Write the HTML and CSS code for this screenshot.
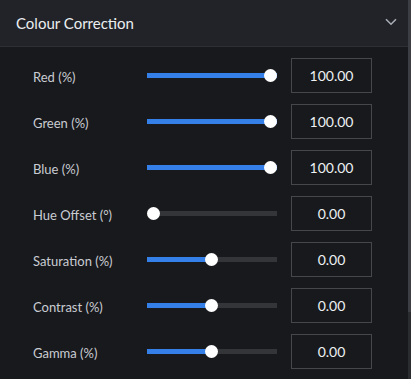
FILE: index.html
```html
<!DOCTYPE html>
<html>
<head>
<meta charset="utf-8">
<link rel="stylesheet" href="styles.css">
</head>
<body>
<div class="frame">
  <div class="panel">
    <div class="header">
      <span class="title">Colour Correction</span>
      <svg class="chevron" width="12" height="8" viewBox="0 0 12 8"><path d="M1 1.2 L6 6.2 L11 1.2" fill="none" stroke="#a9adb5" stroke-width="1.6"/></svg>
    </div>
    <div class="body">
      <div class="row">
        <span class="label">Red (%)</span>
        <div class="slider"><div class="track"><div class="fill" style="width:130px"></div></div><div class="thumb" style="left:117px"></div></div>
        <div class="box">100.00</div>
      </div>
      <div class="row">
        <span class="label">Green (%)</span>
        <div class="slider"><div class="track"><div class="fill" style="width:130px"></div></div><div class="thumb" style="left:117px"></div></div>
        <div class="box">100.00</div>
      </div>
      <div class="row">
        <span class="label">Blue (%)</span>
        <div class="slider"><div class="track"><div class="fill" style="width:130px"></div></div><div class="thumb" style="left:117px"></div></div>
        <div class="box">100.00</div>
      </div>
      <div class="row">
        <span class="label">Hue Offset (°)</span>
        <div class="slider"><div class="track"><div class="fill" style="width:0px"></div></div><div class="thumb" style="left:0px"></div></div>
        <div class="box">0.00</div>
      </div>
      <div class="row">
        <span class="label">Saturation (%)</span>
        <div class="slider"><div class="track"><div class="fill" style="width:65px"></div></div><div class="thumb" style="left:58px"></div></div>
        <div class="box">0.00</div>
      </div>
      <div class="row">
        <span class="label">Contrast (%)</span>
        <div class="slider"><div class="track"><div class="fill" style="width:65px"></div></div><div class="thumb" style="left:58px"></div></div>
        <div class="box">0.00</div>
      </div>
      <div class="row">
        <span class="label">Gamma (%)</span>
        <div class="slider"><div class="track"><div class="fill" style="width:65px"></div></div><div class="thumb" style="left:58px"></div></div>
        <div class="box">0.00</div>
      </div>
    </div>
  </div>
  <div class="scrollbar"><div class="scroll-thumb"></div></div>
</div>
</body>
</html>
```
FILE: styles.css
```css
html, body {
  margin: 0;
  padding: 0;
  background: #18191d;
  width: 411px;
  height: 379px;
  overflow: hidden;
  font-family: Lato, "Noto Sans", sans-serif;
}
.frame {
  display: flex;
  width: 411px;
  height: 379px;
}
.panel {
  flex: 1;
  display: flex;
  flex-direction: column;
  min-width: 0;
}
.header {
  height: 46px;
  box-sizing: border-box;
  background: #212328;
  border-bottom: 1px solid #2d2f34;
  height: 47px;
  display: flex;
  align-items: center;
  justify-content: space-between;
  padding: 0 11px 0 16px;
}
.title {
  color: #eceef1;
  font-size: 15px;
  margin-top: -1px;
}
.chevron {
  display: block;
  margin-top: -3px;
}
.body {
  display: flex;
  flex-direction: column;
  gap: 11px;
  padding: 11px 0 0 33px;
}
.row {
  display: grid;
  grid-template-columns: 114px 130px 81px;
  column-gap: 0;
  align-items: center;
  height: 35px;
}
.label {
  color: #c9ccd2;
  font-size: 13px;
  padding-top: 2px;
}
.slider {
  position: relative;
  height: 13px;
  margin-right: -14px;
  width: 130px;
}
.track {
  position: absolute;
  left: 0;
  top: 4px;
  width: 130px;
  height: 5px;
  background: #343538;
  overflow: hidden;
}
.fill {
  height: 100%;
  background: #357fe9;
}
.thumb {
  position: absolute;
  top: 0;
  width: 13px;
  height: 13px;
  border-radius: 50%;
  background: #ffffff;
}
.row .box {
  margin-left: 14px;
}
.row {
  grid-template-columns: 114px 130px 95px;
}
.box {
  box-sizing: border-box;
  width: 81px;
  height: 35px;
  border: 1px solid #45474b;
  display: flex;
  align-items: center;
  justify-content: center;
  color: #eef0f3;
  font-size: 14px;
}
.scrollbar {
  width: 3px;
  background: #2a2c30;
  display: flex;
  flex-direction: column;
}
.scroll-thumb {
  height: 312px;
  background: #3c3e43;
}
```
